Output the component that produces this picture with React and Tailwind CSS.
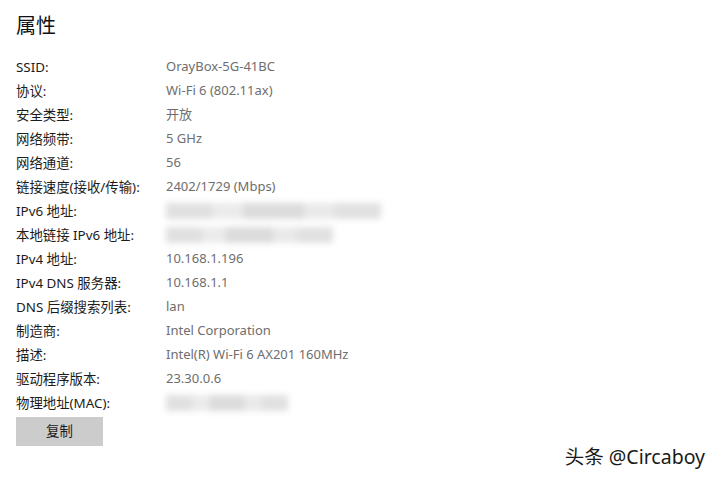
import React from 'react';

const rows = [
  ['SSID:', 'OrayBox-5G-41BC'],
  ['协议:', 'Wi-Fi 6 (802.11ax)'],
  ['安全类型:', '开放'],
  ['网络频带:', '5 GHz'],
  ['网络通道:', '56'],
  ['链接速度(接收/传输):', '2402/1729 (Mbps)'],
  ['IPv6 地址:', { blur: 'w-[215px]' }],
  ['本地链接 IPv6 地址:', { blur: 'w-[167px]' }],
  ['IPv4 地址:', '10.168.1.196'],
  ['IPv4 DNS 服务器:', '10.168.1.1'],
  ['DNS 后缀搜索列表:', 'lan'],
  ['制造商:', 'Intel Corporation'],
  ['描述:', 'Intel(R) Wi-Fi 6 AX201 160MHz'],
  ['驱动程序版本:', '23.30.0.6'],
  ['物理地址(MAC):', { blur: 'w-[122px]' }],
];

const Blurred = ({ width }) => (
  <div className={`${width} h-[16px] flex blur-[3px] opacity-80`}>
    <div className="flex-[3] bg-[#d8d8d8]" />
    <div className="flex-[2] bg-[#e6e6e6]" />
    <div className="flex-[4] bg-[#d2d2d2]" />
    <div className="flex-[2] bg-[#e4e4e4]" />
    <div className="flex-[3] bg-[#d9d9d9]" />
  </div>
);

export default function App() {
  return (
    <div
      className="relative w-[720px] h-[482px] bg-white overflow-hidden"
      style={{ fontFamily: '"Noto Sans", "Noto Sans CJK SC", sans-serif' }}
    >
      <div className="pl-4 pt-[11px]">
        <h1 className="text-[20px] leading-[30px] text-[#111] font-normal">属性</h1>
        <div className="mt-[14px]">
          {rows.map(([label, value]) => (
            <div key={label} className="flex items-center h-6">
              <span className="w-[150px] text-[13.4px] text-[#1c1c1c]">{label}</span>
              {typeof value === 'string' ? (
                <span className="text-[13px] text-[#6e6e6e]">{value}</span>
              ) : (
                <Blurred width={value.blur} />
              )}
            </div>
          ))}
        </div>
        <button className="mt-[2px] w-[87px] h-[29px] bg-[#cccccc] text-[13.4px] text-[#1c1c1c]">
          复制
        </button>
      </div>
      <div
        className="absolute right-[15px] bottom-[11px] text-[19.5px] text-[#1a1a1a]"
        style={{ textShadow: '0 0 2px #fff' }}
      >
        头条 @Circaboy
      </div>
    </div>
  );
}
